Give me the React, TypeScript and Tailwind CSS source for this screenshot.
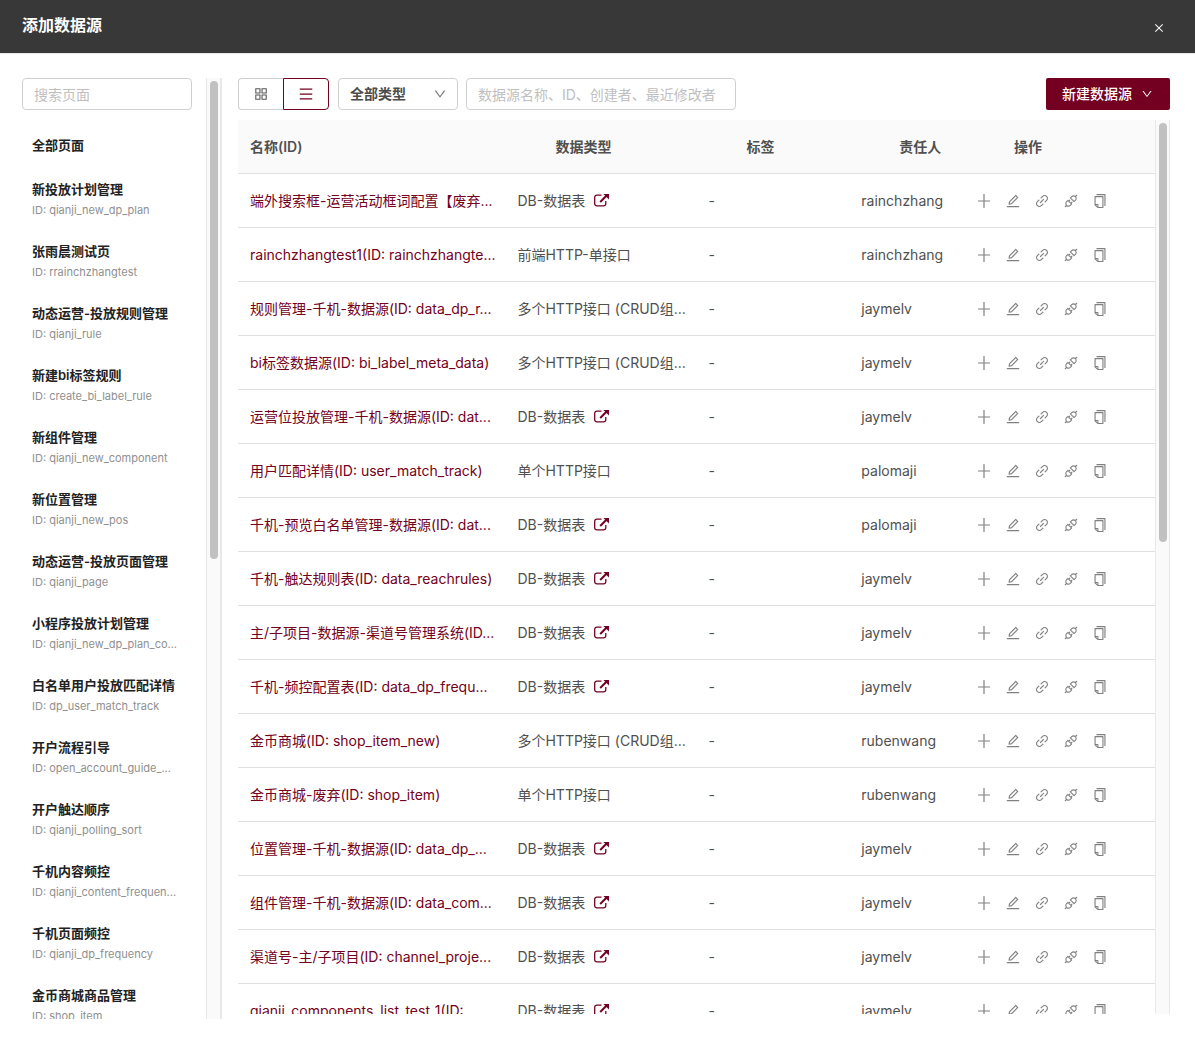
import React from "react";
import {
  AiOutlineApi,
  AiOutlineAppstore,
  AiOutlineClose,
  AiOutlineCopy,
  AiOutlineDown,
  AiOutlineEdit,
  AiOutlineLink,
  AiOutlineMenu,
} from "react-icons/ai";

type Page = { name: string; id: string };
type Source = { name: string; type: string; owner: string };

const pages: Page[] = [
  { name: "新投放计划管理", id: "qianji_new_dp_plan" },
  { name: "张雨晨测试页", id: "rrainchzhangtest" },
  { name: "动态运营-投放规则管理", id: "qianji_rule" },
  { name: "新建bi标签规则", id: "create_bi_label_rule" },
  { name: "新组件管理", id: "qianji_new_component" },
  { name: "新位置管理", id: "qianji_new_pos" },
  { name: "动态运营-投放页面管理", id: "qianji_page" },
  { name: "小程序投放计划管理", id: "qianji_new_dp_plan_co..." },
  { name: "白名单用户投放匹配详情", id: "dp_user_match_track" },
  { name: "开户流程引导", id: "open_account_guide_..." },
  { name: "开户触达顺序", id: "qianji_polling_sort" },
  { name: "千机内容频控", id: "qianji_content_frequen..." },
  { name: "千机页面频控", id: "qianji_dp_frequency" },
  { name: "金币商城商品管理", id: "shop_item" },
];

const DB = "DB-数据表";
const CRUD = "多个HTTP接口 (CRUD组...";
const SINGLE = "单个HTTP接口";

const sources: Source[] = [
  { name: "端外搜索框-运营活动框词配置【废弃...", type: DB, owner: "rainchzhang" },
  { name: "rainchzhangtest1(ID: rainchzhangte...", type: "前端HTTP-单接口", owner: "rainchzhang" },
  { name: "规则管理-千机-数据源(ID: data_dp_r...", type: CRUD, owner: "jaymelv" },
  { name: "bi标签数据源(ID: bi_label_meta_data)", type: CRUD, owner: "jaymelv" },
  { name: "运营位投放管理-千机-数据源(ID: dat...", type: DB, owner: "jaymelv" },
  { name: "用户匹配详情(ID: user_match_track)", type: SINGLE, owner: "palomaji" },
  { name: "千机-预览白名单管理-数据源(ID: dat...", type: DB, owner: "palomaji" },
  { name: "千机-触达规则表(ID: data_reachrules)", type: DB, owner: "jaymelv" },
  { name: "主/子项目-数据源-渠道号管理系统(ID...", type: DB, owner: "jaymelv" },
  { name: "千机-频控配置表(ID: data_dp_frequ...", type: DB, owner: "jaymelv" },
  { name: "金币商城(ID: shop_item_new)", type: CRUD, owner: "rubenwang" },
  { name: "金币商城-废弃(ID: shop_item)", type: SINGLE, owner: "rubenwang" },
  { name: "位置管理-千机-数据源(ID: data_dp_...", type: DB, owner: "jaymelv" },
  { name: "组件管理-千机-数据源(ID: data_com...", type: DB, owner: "jaymelv" },
  { name: "渠道号-主/子项目(ID: channel_proje...", type: DB, owner: "jaymelv" },
  { name: "qianji_components_list_test_1(ID:", type: DB, owner: "jaymelv" },
];

function PlusIcon({ size }: { size: number }) {
  return (
    <svg viewBox="0 0 16 16" width={size} height={size} fill="none" aria-hidden="true">
      <path d="M8 1v14M2 8h12" stroke="currentColor" strokeWidth="1.2" />
    </svg>
  );
}

const actions = [
  { label: "添加", Icon: PlusIcon },
  { label: "编辑", Icon: AiOutlineEdit },
  { label: "链接", Icon: AiOutlineLink },
  { label: "接口", Icon: AiOutlineApi },
  { label: "复制", Icon: AiOutlineCopy },
];

function ExternalLinkIcon() {
  return (
    <svg viewBox="0 0 15 15" className="size-[15px]" fill="none" aria-hidden="true">
      <path
        d="M7.5 2.1H2.8A2.1 2.1 0 0 0 .7 4.2v6.6a2.1 2.1 0 0 0 2.1 2.1h6.9a2.1 2.1 0 0 0 2.1-2.1V8"
        stroke="currentColor"
        strokeWidth="1.3"
      />
      <path d="M6.2 9 12.4 2.8" stroke="currentColor" strokeWidth="2" />
      <path d="M9.4 1H15v5.6Z" fill="currentColor" />
    </svg>
  );
}

function ScrollTrack({ thumb }: { thumb: string }) {
  return (
    <div className="w-[15px] shrink-0 border-x border-[#e8e8e8] bg-[#fafafa] pt-[3px]" aria-hidden="true">
      <div className={`mx-auto w-2 rounded-full bg-[#c1c1c1] ${thumb}`} />
    </div>
  );
}

function Sidebar() {
  return (
    <aside className="flex w-[200px] shrink-0 border-r border-[#e8e8e8]">
      <div className="min-w-0 flex-1 overflow-hidden">
        <input
          type="text"
          aria-label="搜索页面"
          placeholder="搜索页面"
          className="block h-8 w-[170px] rounded border border-[#d0d0d0] px-[11px] text-sm placeholder:text-[#bfbfbf]"
        />
        <nav className="mt-[15px]">
          <a href="#all" className="mb-[3px] block px-[10px] py-[10px] text-[13px] leading-[21px] font-semibold text-[#222]">
            全部页面
          </a>
          {pages.map((p) => (
            <a key={p.name} href={`#${p.id}`} className="block px-[10px] py-[10px] whitespace-nowrap">
              <span className="block text-[13px] leading-[21px] font-semibold text-[#222]">{p.name}</span>
              <span className="block text-[11px] leading-[21px] text-[#909090]">ID: {p.id}</span>
            </a>
          ))}
        </nav>
      </div>
      <ScrollTrack thumb="h-[51%]" />
    </aside>
  );
}

function Toolbar() {
  return (
    <div className="flex h-8 shrink-0 items-stretch gap-2">
      <div className="mr-px flex">
        <button
          type="button"
          aria-label="卡片视图"
          className="flex w-[45px] items-center justify-center rounded-l border border-r-0 border-[#d0d0d0] text-[#555]"
        >
          <AiOutlineAppstore size={16} />
        </button>
        <button
          type="button"
          aria-label="列表视图"
          aria-pressed="true"
          className="flex w-[46px] items-center justify-center rounded-r border border-[#730020] text-[#730020]"
        >
          <AiOutlineMenu size={16} />
        </button>
      </div>
      <div className="relative w-[120px]">
        <select
          aria-label="类型"
          className="h-full w-full appearance-none rounded border border-[#d0d0d0] bg-white px-[11px] text-sm font-semibold text-[#4c4c4c]"
        >
          <option>全部类型</option>
        </select>
        <AiOutlineDown size={14} className="pointer-events-none absolute top-[9px] right-[11px] text-[#777]" />
      </div>
      <input
        type="text"
        aria-label="搜索数据源"
        placeholder="数据源名称、ID、创建者、最近修改者"
        className="w-[270px] rounded border border-[#d0d0d0] px-[11px] pt-[2px] text-sm placeholder:text-[#bfbfbf]"
      />
      <button
        type="button"
        className="ml-auto flex items-center gap-[9px] rounded-xs bg-[#730020] pr-[17px] pl-4 text-sm font-medium text-white"
      >
        新建数据源
        <AiOutlineDown size={12} />
      </button>
    </div>
  );
}

function SourceTable() {
  return (
    <table className="w-full table-fixed border-separate border-spacing-0 text-left text-sm text-[#505050]">
      <thead>
        <tr className="h-[54px] bg-[#fafafa] [&>th]:border-b [&>th]:border-[#e0e0e0] [&>th]:font-semibold">
          <th className="w-7/24 pl-3">名称(ID)</th>
          <th className="w-5/24 pl-[50px]">数据类型</th>
          <th className="w-4/24 pl-[50px]">标签</th>
          <th className="w-3/24 pl-[50px]">责任人</th>
          <th className="w-5/24 pl-[50px]">操作</th>
        </tr>
      </thead>
      <tbody>
        {sources.map((s) => (
          <tr
            key={s.name}
            className="h-[54px] whitespace-nowrap [&>td]:border-b [&>td]:border-[#e0e0e0] [&>td]:pl-3"
          >
            <td>
              <a href="#source" className="text-[#730020]">
                {s.name}
              </a>
            </td>
            <td>
              <div className="flex items-center gap-[9px]">
                {s.type}
                {s.type === DB && (
                  <a href="#table" aria-label="打开数据表" className="text-[#730020]">
                    <ExternalLinkIcon />
                  </a>
                )}
              </div>
            </td>
            <td>-</td>
            <td>{s.owner}</td>
            <td>
              <div className="flex gap-[13px] text-[#808080]">
                {actions.map(({ label, Icon }) => (
                  <button key={label} type="button" aria-label={label} className="flex size-4 items-center justify-center">
                    <Icon size={16} />
                  </button>
                ))}
              </div>
            </td>
          </tr>
        ))}
      </tbody>
    </table>
  );
}

export default function App() {
  return (
    <div className="flex h-screen flex-col overflow-hidden bg-white font-['Inter','Noto_Sans_CJK_SC',sans-serif]">
      <header className="flex h-[54px] shrink-0 items-center justify-between border-b border-[#e8e8e8] bg-[#383838] pr-[30px] pl-[22px] text-white">
        <h1 className="pb-1 text-base font-bold">添加数据源</h1>
        <button type="button" aria-label="关闭" className="pt-[3px]">
          <AiOutlineClose size={12} />
        </button>
      </header>
      <main className="flex min-h-0 flex-1 gap-4 pt-6 pr-[25px] pb-5 pl-[22px]">
        <Sidebar />
        <section className="flex min-w-0 flex-1 flex-col gap-[10px] pb-[5px]">
          <Toolbar />
          <div className="flex min-h-0 flex-1">
            <div className="min-w-0 flex-1 overflow-hidden">
              <SourceTable />
            </div>
            <ScrollTrack thumb="h-[47%]" />
          </div>
        </section>
      </main>
    </div>
  );
}
